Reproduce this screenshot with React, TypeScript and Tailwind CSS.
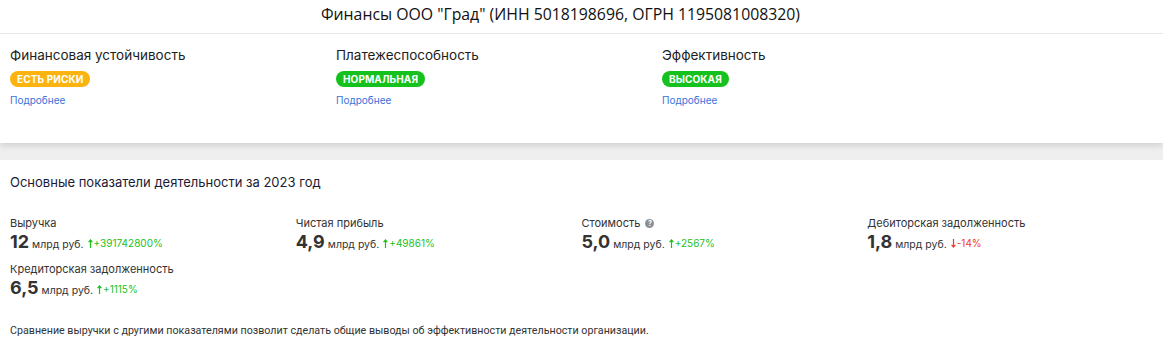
const ratings = [
  { title: "Финансовая устойчивость", badge: "ЕСТЬ РИСКИ", color: "bg-[#fbb30f]" },
  { title: "Платежеспособность", badge: "НОРМАЛЬНАЯ", color: "bg-[#15c11c]" },
  { title: "Эффективность", badge: "ВЫСОКАЯ", color: "bg-[#15c11c]" },
];

const metrics = [
  { label: "Выручка", value: "12", change: "+391742800%", up: true },
  { label: "Чистая прибыль", value: "4,9", change: "+49861%", up: true },
  { label: "Стоимость", value: "5,0", change: "+2567%", up: true, hint: true },
  { label: "Дебиторская задолженность", value: "1,8", change: "-14%", up: false },
  { label: "Кредиторская задолженность", value: "6,5", change: "+1115%", up: true },
];

function Arrow({ up }: { up: boolean }) {
  return (
    <svg width="5" height="9" viewBox="0 0 5 9" className="mr-[1px]">
      {up ? (
        <path d="M2.5 9V1.2M0.6 3.2L2.5 1L4.4 3.2" stroke="currentColor" strokeWidth="1.2" fill="none" />
      ) : (
        <path d="M2.5 0V7.8M0.6 5.8L2.5 8L4.4 5.8" stroke="currentColor" strokeWidth="1.2" fill="none" />
      )}
    </svg>
  );
}

export default function App() {
  return (
    <div className="w-[1163px] h-[348px] bg-[#efefef] overflow-hidden font-['Inter',sans-serif]">
      <div className="bg-white shadow-[0_3px_6px_rgba(0,0,0,0.12)]">
        <div className="h-[34px] pb-[4px] pr-[42px] flex items-center justify-center border-b border-[#e6e6e6] font-['Open_Sans',sans-serif] text-[15.8px] text-[#111]">
          Финансы ООО "Град" (ИНН 5018198696, ОГРН 1195081008320)
        </div>
        <div className="flex px-[10px] pt-[12px] h-[109px]">
          {ratings.map((r) => (
            <div key={r.title} className="w-[326px] flex flex-col items-start">
              <div className="text-[13.5px] leading-[18px] text-[#1d1d1d]">{r.title}</div>
              <span
                className={`mt-[7px] ${r.color} rounded-full px-[7px] h-[16px] flex items-center text-[10px] font-bold text-white tracking-[0.1px]`}
              >
                {r.badge}
              </span>
              <a className="mt-[6px] text-[10px] leading-[14px] text-[#3b73d6]">Подробнее</a>
            </div>
          ))}
        </div>
      </div>
      <div className="mt-[17px] bg-white h-[200px] px-[10px] pt-[13px]">
        <div className="text-[13px] leading-[18px] text-[#1b1b33]">
          Основные показатели деятельности за 2023 год
        </div>
        <div className="grid grid-cols-4 mt-[25px] gap-y-[9px]">
          {metrics.map((m) => (
            <div key={m.label} className="flex flex-col">
              <div className="flex items-center text-[11px] leading-[15px] text-[#333]">
                {m.label}
                {m.hint && (
                  <span className="ml-[5px] w-[9px] h-[9px] rounded-full bg-[#8a8f96] text-white text-[7px] font-bold flex items-center justify-center leading-none">
                    ?
                  </span>
                )}
              </div>
              <div className="flex items-baseline">
                <span className="text-[18px] font-bold leading-[22px] text-[#333]">{m.value}</span>
                <span className="ml-[3px] text-[10.5px] text-[#333]">млрд руб.</span>
                <span
                  className={`ml-[4px] flex items-center text-[10px] ${m.up ? "text-[#1bbf1b]" : "text-[#f0392b]"}`}
                >
                  <Arrow up={m.up} />
                  {m.change}
                </span>
              </div>
            </div>
          ))}
        </div>
        <div className="mt-[24px] font-['Roboto',sans-serif] text-[10.7px] text-[#333]">
          Сравнение выручки с другими показателями позволит сделать общие выводы об эффективности деятельности организации.
        </div>
      </div>
    </div>
  );
}
